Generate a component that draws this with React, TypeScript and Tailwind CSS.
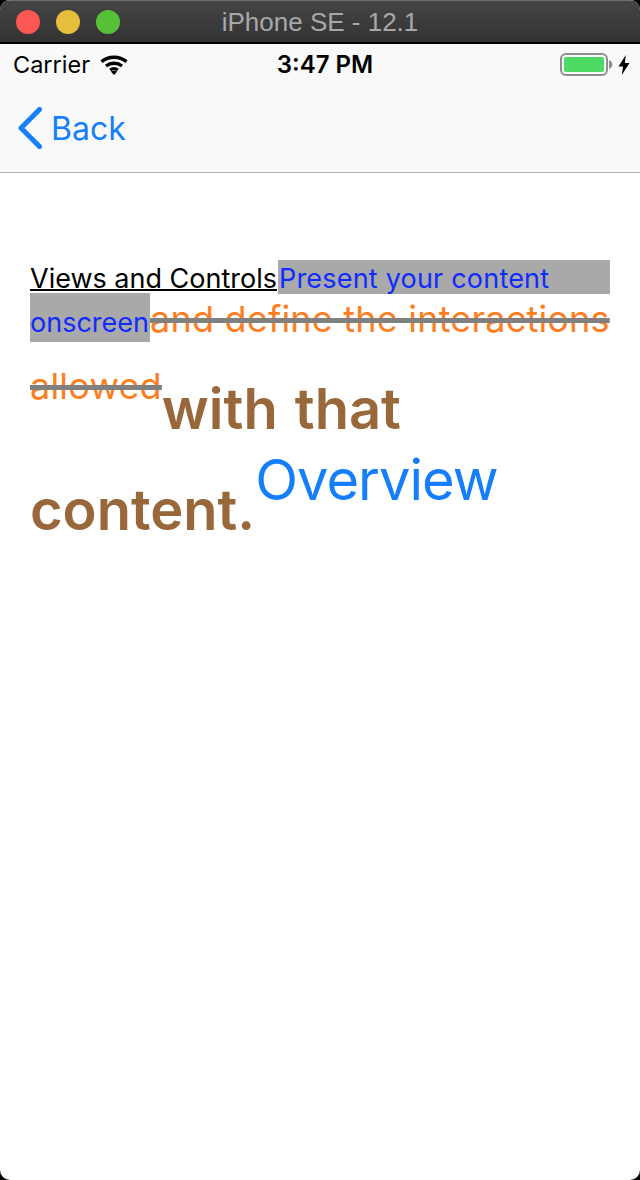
const SF = "font-['Inter','Liberation_Sans',sans-serif]";

function WifiIcon() {
  return (
    <svg width="28" height="20" viewBox="0 0 28 20" fill="none" stroke="#000" strokeWidth="3.4">
      <path d="M1.5 6.6C8.5 0.8 19.5 0.8 26.5 6.6" />
      <path d="M6 11C10.6 7.4 17.4 7.4 22 11" />
      <path d="M10.2 15C12.4 13.4 15.6 13.4 17.8 15" />
      <path d="M14 20L10.8 16.6C12.6 15.4 15.4 15.4 17.2 16.6Z" fill="#000" stroke="none" />
    </svg>
  );
}

function Battery() {
  return (
    <div className="flex items-center">
      <div className="w-[48px] h-[23px] rounded-[6px] border-2 border-[#8e8e8e] p-[2px]">
        <div className="w-full h-full rounded-[2px] bg-[#4cd964]" />
      </div>
      <svg width="4" height="9" viewBox="0 0 4 9" className="ml-[1px]">
        <path d="M0 0C2 0.5 3.4 2.5 3.4 4.5C3.4 6.5 2 8.500 0 9Z" fill="#8e8e8e" />
      </svg>
      <svg width="12" height="20" viewBox="0 0 12 20" className="ml-[5px]">
        <path d="M7.8 0L0.500 11.500H5L3.800 20L11.500 8H6.800Z" fill="#000" />
      </svg>
    </div>
  );
}

export default function App() {
  return (
    <div className={`w-[640px] h-[1180px] bg-black ${SF}`}>
      <div className="h-[1180px] rounded-[10px] overflow-hidden bg-white flex flex-col">
        <div className="relative h-[44px] shrink-0 flex items-center bg-gradient-to-b from-[#454545] to-[#333333] border-t border-[#6e6e6e] border-b-2 border-b-black px-4">
          <div className="flex gap-4">
            <div className="w-6 h-6 rounded-full bg-[#fc5753]" />
            <div className="w-6 h-6 rounded-full bg-[#e6bd3c]" />
            <div className="w-6 h-6 rounded-full bg-[#57c038]" />
          </div>
          <div className="absolute inset-0 pt-px flex items-center justify-center text-[26px] text-[#a8a8a8] font-['Liberation_Sans',sans-serif]">
            iPhone SE - 12.1
          </div>
        </div>

        <div className="h-[128px] shrink-0 bg-[#f9f9f9] border-b border-[#b2b2b2] box-content">
          <div className="relative h-[40px] flex items-center justify-between pl-[13px] pr-[10px] pt-px">
            <div className="flex items-center gap-[10px] text-[23.5px] text-black">
              <span>Carrier</span>
              <WifiIcon />
            </div>
            <div className="absolute inset-0 pl-[10px] pt-px flex items-center justify-center text-[24px] font-semibold text-black">3:47 PM</div>
            <Battery />
          </div>
          <div className="flex items-center h-[88px] pl-[18px] gap-[9px] text-[#147efb] text-[32px]">
            <svg width="24" height="42" viewBox="0 0 24 42" fill="none" stroke="#147efb" strokeWidth="5" strokeLinecap="round" strokeLinejoin="round">
              <path d="M21.500 2.500L3 21L21.500 39.500" />
            </svg>
            <span className="pt-px">Back</span>
          </div>
        </div>

        <div className="pt-[87px] px-[30px] text-[27px] leading-[20px] w-[640px]">
          <span className="underline decoration-2 underline-offset-[1px] text-black">Views and Controls</span>
          <span className="inline-block w-[332px] h-[34px] mb-[-1px] ml-px bg-[#a9a9a9] text-[#0f2bff] leading-[38px] pl-px tracking-[0.2px]">Present your content</span>
          <br />
          <span className="inline-block w-[120px] h-[49px] mb-[23px] bg-[#a9a9a9] text-[#0f2bff] leading-[59px]">onscreen</span>
          <span className="text-[36px] tracking-[0.2px] whitespace-nowrap text-[#fd7e21] line-through decoration-[5px] decoration-[#808080]">and define the interactions</span>
          <br />
          <span className="text-[36px] tracking-[0.2px] align-[30px] text-[#fd7e21] line-through decoration-[5px] decoration-[#808080]">allowed</span>
          <span className="text-[56px] font-semibold text-[#98673a] leading-[89px] [word-spacing:3px]">with that</span>
          <br />
          <span className="text-[56px] font-semibold text-[#98673a] leading-[113px]">content.</span>
          <span className="text-[56px] tracking-[-1px] text-[#147efb] align-[30px] leading-[40px]">Overview</span>
        </div>
      </div>
    </div>
  );
}
